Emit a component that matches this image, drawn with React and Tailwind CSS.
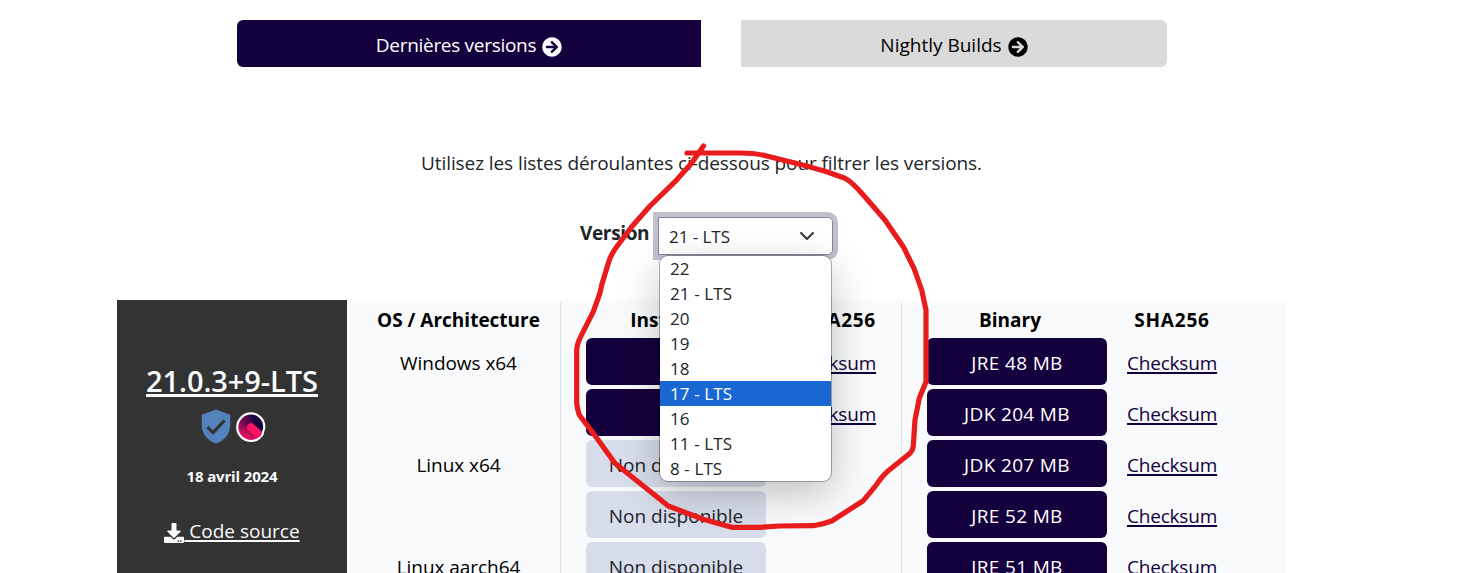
import React from "react";
import { FaArrowCircleRight, FaDownload } from "react-icons/fa";

const rows = [
  { os: "Windows x64", installer: true, size: "JRE 48 MB" },
  { os: "", installer: true, size: "JDK 204 MB" },
  { os: "Linux x64", installer: false, size: "JDK 207 MB" },
  { os: "", installer: false, size: "JRE 52 MB" },
  { os: "Linux aarch64", installer: false, size: "JRE 51 MB" },
];

const versions = ["22", "21 - LTS", "20", "19", "18", "17 - LTS", "16", "11 - LTS", "8 - LTS"];

function Checksum() {
  return (
    <a className="flex h-[47px] w-[90px] items-center pt-[3px] whitespace-nowrap tracking-[-0.2px] text-[#14003c] underline decoration-2 underline-offset-[2px]">
      Checksum
    </a>
  );
}

function Temurin() {
  return (
    <svg viewBox="0 0 30 30" className="size-[30px]">
      <defs>
        <linearGradient id="disc" x1="0.1" y1="0.7" x2="0.9" y2="0.35">
          <stop offset="0.1" stopColor="#8a0d55" />
          <stop offset="0.55" stopColor="#4c0849" />
          <stop offset="0.85" stopColor="#14003c" />
        </linearGradient>
        <linearGradient id="glow" x1="0.6" y1="0" x2="0.45" y2="1">
          <stop offset="0.4" stopColor="#ff1464" stopOpacity="0" />
          <stop offset="1" stopColor="#ff1464" stopOpacity="0.9" />
        </linearGradient>
      </defs>
      <path d="M15 .3a14.300 14.300 0 0 1 14.300 14.500c0 2.200-.6 4-1.300 5.200.2 2.500-1 4.300-2.600 5.200C23 28.500 19.500 30 15 30A14.800 14.800 0 0 1 15 .3Z" fill="#fff" />
      <path d="M15 2.500A12.300 12.300 0 0 1 27.200 15c0 1.300-.2 2.500-.6 3.500L23.500 24.300C21.500 26.500 18.500 27.700 15 27.700A12.600 12.600 0 0 1 15 2.500Z" fill="url(#disc)" />
      <path d="M15 2.500A12.300 12.300 0 0 1 22 5L18 15l5.500 9.300C21.500 26.500 18.500 27.700 15 27.700A12.600 12.600 0 0 1 15 2.500Z" fill="url(#glow)" />
      <path d="M14.900 15.300 21.600 21.300" stroke="#ff1464" strokeWidth="8" strokeLinecap="round" />
    </svg>
  );
}

export default function App() {
  return (
    <div className="relative h-[573px] w-[1457px] overflow-hidden bg-white font-['Open_Sans',sans-serif] text-[19px] leading-[30px] text-black">
      <div className="ml-[237px] flex gap-10 pt-5">
        <div className="flex h-[47px] w-[464px] items-center justify-center gap-[6px] rounded-l-md bg-[#14003c] pt-[3px] text-white">
          <span className="tracking-[-0.3px]">Dernières versions</span>
          <FaArrowCircleRight className="mt-[3px] size-5" />
        </div>
        <div className="flex h-[47px] w-[426px] items-center justify-center gap-[6px] rounded-r-md bg-[#dadada] pt-[3px]">
          <span>Nightly Builds</span>
          <FaArrowCircleRight className="mt-[3px] size-5" />
        </div>
      </div>

      <p className="mt-[81px] pl-[421px] tracking-[-0.085px] text-[#212529]">
        Utilisez les listes déroulantes ci-dessous pour filtrer les versions.
      </p>

      <div className="mt-[39px] flex h-[38px] pl-[580px]">
        <label className="w-[78px] pt-px font-bold tracking-[-0.35px] text-[#212529]">Version</label>
        <div className="flex h-[38px] w-[175px] items-center justify-between rounded-r-[5px] border border-[#8a80a0] bg-white pr-[17px] pl-[10px] text-[17px] text-[#212529] shadow-[0_0_0_5px_#c4bfcf]">
          <span className="pt-[2px] tracking-[-0.05px]">21 - LTS</span>
          <svg viewBox="0 0 16 16" className="size-4">
            <path d="m2 5 6 6 6-6" fill="none" stroke="#343a40" strokeWidth="2" strokeLinecap="round" strokeLinejoin="round" />
          </svg>
        </div>
      </div>

      <div className="mt-[45px] ml-[117px] flex h-[300px] w-[1170px] bg-[#f8fafc]">
        <div className="flex w-[230px] flex-col items-center bg-[#333333] text-[#f8fafc]">
          <h2 className="mt-[63px] text-[29px] leading-[36px] font-semibold tracking-[-0.07px] underline decoration-[3px] underline-offset-[2px]">
            21.0.3+9-LTS
          </h2>
          <div className="mt-[10px] flex h-[35px] items-center gap-[5px] pl-[2px]">
            <svg viewBox="0 0 30 35" className="h-[35px] w-[30px]">
              <path d="M15 .5 29.200 5.800V16c0 8.500-5.200 15.500-14.200 18.500C6 31.500.8 24.500.8 16V5.800Z" fill="#5382bd" />
              <path d="m6.500 18.200 5.500 5.500L23.500 11.500" fill="none" stroke="#333333" strokeWidth="3.200" />
            </svg>
            <Temurin />
          </div>
          <div className="mt-[17px] text-[15px] font-bold tracking-[-0.14px]">18 avril 2024</div>
          <a className="mt-[25px] flex items-center">
            <FaDownload className="mt-[3px] size-5" />
            <span className="whitespace-pre underline decoration-2 underline-offset-[2px]"> Code source</span>
          </a>
        </div>

        <div className="w-[213px] pt-[2px] pl-[10px] text-center">
          <div className="flex h-9 items-center justify-center font-bold">OS / Architecture</div>
          <div className="flex flex-col gap-1">
            {rows.map((r, i) => (
              <div key={i} className="flex h-[47px] items-center justify-center pt-[3px] tracking-[-0.05px]">{r.os}</div>
            ))}
          </div>
        </div>

        <div className="mt-[2px] w-[341px] border-l border-[#dee2e6] pl-[25px]">
          <div className="flex h-9 items-center gap-5 font-bold">
            <div className="w-[180px] pr-[12px] text-center">Installer</div>
            <div className="w-[90px] pl-[15px] tracking-[0.7px]">SHA256</div>
          </div>
          <div className="flex flex-col gap-1">
            {rows.map((r, i) => (
              <div key={i} className="flex gap-5">
                {r.installer ? (
                  <div className="h-[47px] w-[180px] rounded-md bg-[#14003c]" />
                ) : (
                  <div className="flex h-[47px] w-[180px] items-center justify-center rounded-md bg-[#d7ddea] pt-[3px] text-[#212529]">Non disponible</div>
                )}
                {r.installer && <Checksum />}
              </div>
            ))}
          </div>
        </div>

        <div className="mt-[2px] border-l border-[#dee2e6] pl-[25px]">
          <div className="flex h-9 items-center gap-5 font-bold">
            <div className="w-[180px] pr-[14px] text-center">Binary</div>
            <div className="w-[90px] text-center tracking-[0.8px]">SHA256</div>
          </div>
          <div className="flex flex-col gap-1">
            {rows.map((r, i) => (
              <div key={i} className="flex gap-5">
                <div className="flex h-[47px] w-[180px] items-center justify-center rounded-md bg-[#14003c] pt-[3px] tracking-[0.35px] text-white">{r.size}</div>
                <Checksum />
              </div>
            ))}
          </div>
        </div>
      </div>

      <div className="absolute top-[256px] left-[660px] w-[171px] rounded-lg bg-white text-[17px] leading-[25px] tracking-[0.1px] text-[#212529] shadow-[0_0_0_1px_rgba(0,0,0,0.3),0_12px_40px_rgba(0,0,0,0.24)]">
        {versions.map((v) => (
          <div key={v} className={v === "17 - LTS" ? "h-[25px] bg-[#1967d2] pl-[10px] text-white" : "h-[25px] pl-[10px]"}>
            {v}
          </div>
        ))}
      </div>

      <svg viewBox="0 0 1457 573" className="pointer-events-none absolute inset-0 h-[573px] w-[1457px]">
        <path
          d="M703.500 146 691.700 163 675 181.700 650 206 631.700 226.700 616.700 246.700Q610 256 608.300 263.300L601.700 285 600 293 593.300 311.700 580.700 336.700Q577 344 576.700 350V403Q577 408 579.300 415L593.300 433.300 615 463.300 640 483.300 668.300 506 703.300 519.300 731.700 527.300H760L780 526 813.300 525.700Q824 524 831.700 521L863.300 500.700 875 486.700Q882 476 888.300 470.700L910 453.300Q913 450 913.300 446L915 420 919.300 398.300 926 381.700V310L921.700 290 914 268.300 903.300 246.700 885 220 863.300 195Q852 182 845 178.300L826.700 171.700 806.700 166 766.700 156Q755 153 740 153H687"
          fill="none" stroke="#e81c1c" strokeWidth="5.200" strokeLinecap="round" strokeLinejoin="round"
        />
      </svg>
    </div>
  );
}
